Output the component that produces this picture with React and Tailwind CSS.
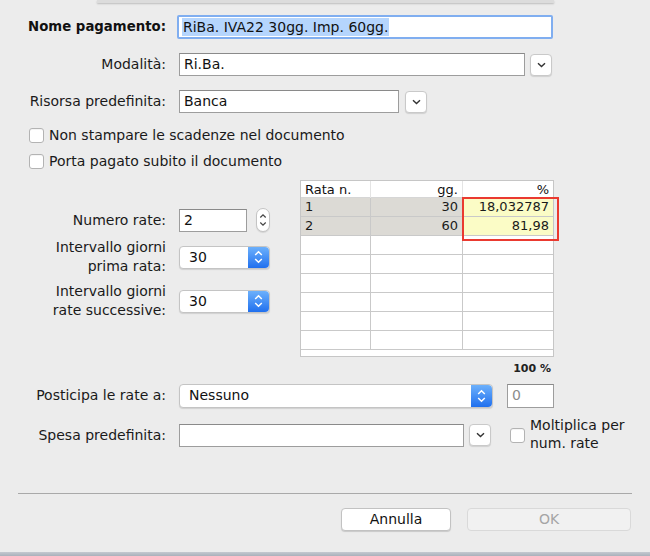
import React from "react";

const Chevron = () => (
  <svg width="9" height="6" viewBox="0 0 9 6" fill="none">
    <path d="M1 1.2 L4.5 4.6 L8 1.2" stroke="#333" strokeWidth="1.4" />
  </svg>
);

const DropBtn = () => (
  <div className="w-[22px] h-[22px] shrink-0 rounded-[4px] bg-white border border-[#c9c9c9] shadow-[0_1px_1px_rgba(0,0,0,0.12)] flex items-center justify-center">
    <Chevron />
  </div>
);

const BlueArrows = () => (
  <div className="w-[21px] self-stretch rounded-r-[4px] bg-gradient-to-b from-[#6cb0fb] to-[#1f6fee] flex items-center justify-center">
    <svg width="9" height="14" viewBox="0 0 9 14" fill="none">
      <path d="M1.2 5 L4.5 1.8 L7.8 5" stroke="white" strokeWidth="1.5" />
      <path d="M1.2 9 L4.5 12.2 L7.8 9" stroke="white" strokeWidth="1.5" />
    </svg>
  </div>
);

const Popup = ({ value, className }) => (
  <div className={"h-[23px] flex items-center bg-white rounded-[4px] border border-[#c4c4c4] shadow-[0_1px_1px_rgba(0,0,0,0.12)] " + className}>
    <div className="flex-1 pl-[9px] text-[#111]">{value}</div>
    <BlueArrows />
  </div>
);

const TextBox = ({ value, className, muted }) => (
  <div className={"h-[23px] bg-white border border-[#9d9d9d] border-t-[#8a8a8a] flex items-center pl-[4px] " + (muted ? "text-[#8c8c8c] " : "text-[#111] ") + className}>
    {value}
  </div>
);

const Check = ({ className }) => (
  <div className={"w-[15px] h-[15px] shrink-0 rounded-[3px] bg-white border border-[#b3b3b3] shadow-[inset_0_1px_0_rgba(0,0,0,0.04)] " + (className || "")} />
);

const rows = [
  ["1", "30", "18,032787"],
  ["2", "60", "81,98"],
  ["", "", ""],
  ["", "", ""],
  ["", "", ""],
  ["", "", ""],
  ["", "", ""],
  ["", "", ""],
];

export default function App() {
  return (
    <div
      className="w-[650px] h-[556px] bg-[#ececec] relative overflow-hidden text-[14px] text-[#1a1a1a]"
      style={{ fontFamily: '"DejaVu Sans", "Lucida Grande", sans-serif' }}
    >
      <div className="absolute left-[97px] top-0 w-[457px] h-[3px] bg-[#dcdcdc] shadow-[0_1px_2px_rgba(0,0,0,0.2)]" />

      <div className="pt-[15px]">
        {/* Nome pagamento */}
        <div className="flex items-center h-[24px]">
          <div className="w-[166px] text-right font-bold text-[13.3px] text-[#111]">Nome pagamento:</div>
          <div className="ml-[11px] w-[376px] h-[24px] rounded-[2px] border-[2px] border-[#80aef0] bg-white flex items-center pl-[3px]">
            <span className="bg-[#b5d5fd] text-[#111] px-[1px] leading-[18px]">RiBa. IVA22 30gg. Imp. 60gg.</span>
          </div>
        </div>

        {/* Modalità */}
        <div className="flex items-center h-[23px] mt-[14px]">
          <div className="w-[166px] text-right">Modalità:</div>
          <TextBox value="Ri.Ba." className="ml-[13px] w-[346px]" />
          <div className="ml-[5px]"><DropBtn /></div>
        </div>

        {/* Risorsa */}
        <div className="flex items-center h-[23px] mt-[14px]">
          <div className="w-[166px] text-right">Risorsa predefinita:</div>
          <TextBox value="Banca" className="ml-[13px] w-[220px]" />
          <div className="ml-[6px]"><DropBtn /></div>
        </div>

        {/* checkboxes */}
        <div className="flex items-center h-[16px] mt-[14px] pl-[29px]">
          <Check />
          <span className="ml-[5px]">Non stampare le scadenze nel documento</span>
        </div>
        <div className="flex items-center h-[16px] mt-[10px] pl-[29px]">
          <Check />
          <span className="ml-[5px]">Porta pagato subito il documento</span>
        </div>

        {/* middle section */}
        <div className="flex mt-[11px]">
          <div className="w-[300px] pt-[28px]">
            <div className="flex items-center h-[24px]">
              <div className="w-[166px] text-right">Numero rate:</div>
              <TextBox value="2" className="ml-[13px] w-[68px]" />
              <div className="ml-[9px] w-[14px] h-[24px] rounded-full bg-white border border-[#c4c4c4] flex items-center justify-center shadow-[0_1px_1px_rgba(0,0,0,0.1)]">
                <svg width="8" height="16" viewBox="0 0 8 16" fill="none">
                  <path d="M1.3 5.5 L4 2.8 L6.7 5.5" stroke="#444" strokeWidth="1.2" />
                  <path d="M1.3 10.5 L4 13.2 L6.7 10.5" stroke="#444" strokeWidth="1.2" />
                </svg>
              </div>
            </div>
            <div className="flex items-center mt-[6px]">
              <div className="w-[166px] text-right leading-[19px]">Intervallo giorni<br />prima rata:</div>
              <Popup value="30" className="ml-[13px] w-[91px]" />
            </div>
            <div className="flex items-center mt-[6px]">
              <div className="w-[166px] text-right leading-[19px]">Intervallo giorni<br />rate successive:</div>
              <Popup value="30" className="ml-[13px] w-[91px]" />
            </div>
          </div>

          <div className="w-[254px] relative">
            <div className="border border-[#c6c6c6] bg-white h-[177px] overflow-hidden text-[13px]">
              <div className="grid grid-cols-[70px_92px_1fr] h-[17px] border-b border-[#d6d6d6] text-[#111]">
                <div className="pl-[4px] leading-[17px] border-r border-[#e4e4e4]">Rata n.</div>
                <div className="text-right pr-[4px] leading-[17px] border-r border-[#e4e4e4]">gg.</div>
                <div className="text-right pr-[4px] leading-[17px]">%</div>
              </div>
              {rows.map((r, i) => {
                const filled = i < 2;
                return (
                  <div key={i} className="grid grid-cols-[70px_92px_1fr] h-[19px] border-b border-[#c9c9c9]">
                    <div className={"pl-[4px] leading-[18px] border-r border-[#c9c9c9] " + (filled ? "bg-[#dcdad5]" : "")}>{r[0]}</div>
                    <div className={"text-right pr-[4px] leading-[18px] border-r border-[#c9c9c9] " + (filled ? "bg-[#dcdad5]" : "")}>{r[1]}</div>
                    <div className={"text-right pr-[4px] leading-[18px] " + (filled ? "bg-[#fbfcc6]" : "")}>{r[2]}</div>
                  </div>
                );
              })}
            </div>
            <div className="absolute left-[162px] top-[17px] w-[97px] h-[44px] border-2 border-[#ea3a30]" />
            <div className="text-right pr-[3px] mt-[4px] font-bold text-[11px] text-[#222]">100 %</div>
          </div>
        </div>

        {/* Posticipa */}
        <div className="flex items-center h-[24px] mt-[6px]">
          <div className="w-[166px] text-right">Posticipa le rate a:</div>
          <Popup value="Nessuno" className="ml-[13px] w-[314px] h-[24px]" />
          <TextBox value="0" muted className="ml-[14px] w-[47px] h-[24px]" />
        </div>

        {/* Spesa */}
        <div className="flex items-start mt-[16px]">
          <div className="w-[166px] text-right h-[23px] leading-[23px]">Spesa predefinita:</div>
          <TextBox value="" className="ml-[13px] w-[285px]" />
          <div className="ml-[5px]"><DropBtn /></div>
          <Check className="ml-[19px] mt-[4px]" />
          <div className="ml-[5px] leading-[18px] -mt-[8px]">Moltiplica per<br />num. rate</div>
        </div>
      </div>

      {/* separator */}
      <div className="absolute left-[18px] top-[493px] w-[614px] h-px bg-[#a9a9a9]" />

      {/* buttons */}
      <div className="absolute top-[508px] left-[341px] flex gap-[16px]">
        <div className="w-[110px] h-[23px] rounded-[4px] bg-white border border-[#c2c2c2] shadow-[0_1px_1px_rgba(0,0,0,0.15)] flex items-center justify-center text-[#111]">Annulla</div>
        <div className="w-[164px] h-[23px] rounded-[4px] bg-[#f1f1f1] border border-[#d9d9d9] flex items-center justify-center text-[#a5a5a5]">OK</div>
      </div>

      <div className="absolute left-0 bottom-0 w-full h-[4px] bg-gradient-to-b from-[#c5c9d0] to-[#aab1bb]" />
    </div>
  );
}
